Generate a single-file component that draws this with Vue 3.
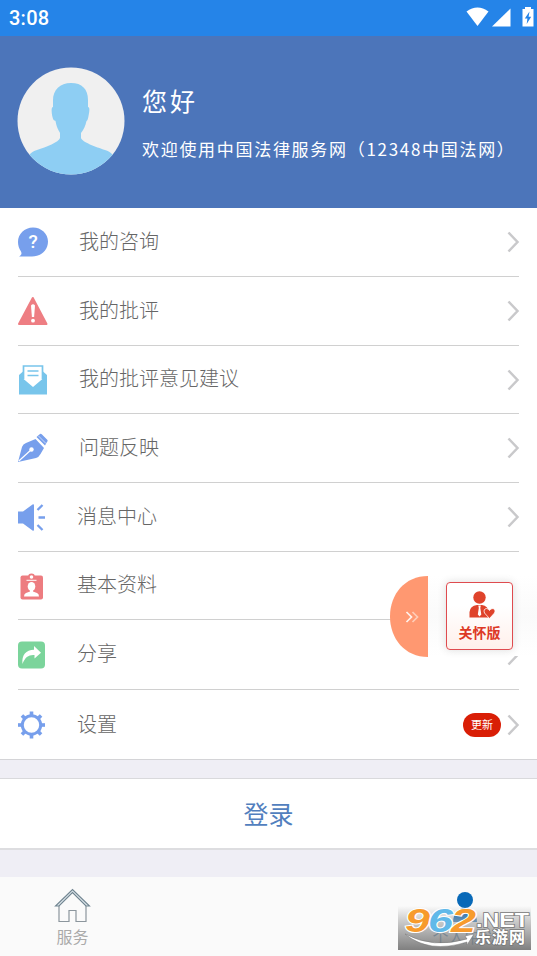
<script setup>
const items = [
  { label: '我的咨询', icon: 'ask', size: 69 },
  { label: '我的批评', icon: 'warn', size: 69 },
  { label: '我的批评意见建议', icon: 'mail', size: 68 },
  { label: '问题反映', icon: 'pen', size: 69 },
  { label: '消息中心', icon: 'sound', size: 69, tight: true },
  { label: '基本资料', icon: 'profile', size: 68, tight: true },
  { label: '分享', icon: 'share', size: 70, tight: true },
  { label: '设置', icon: 'gear', size: 70, tight: true, badge: '更新' },
]
const teeth = [0, 45, 90, 135, 180, 225, 270, 315]
</script>

<template>
  <div class="screen">
    <header class="status">
      <span class="clock">3:08</span>
      <svg class="status-icons" width="70" height="22" viewBox="0 0 70 22">
        <path d="M0.5 4.5Q11.5-3.3 22.5 4.5L11.5 19Z" fill="#fff" />
        <path d="M26 19.5H44.500V1.500Z" fill="#fff" />
        <path d="M59 0h6v2h2.500v17.500h-11V2H59Z" fill="#fff" />
        <path d="M63.500 4.500L58.800 11.500H61.400L60.700 17L65.200 9.700H62.600Z" fill="#2584e8" />
      </svg>
    </header>

    <section class="hero">
      <svg class="avatar" width="108" height="108" viewBox="0 0 108 108">
        <defs><clipPath id="face"><circle cx="54" cy="54" r="53.500" /></clipPath></defs>
        <circle cx="54" cy="54" r="53.500" fill="#f0f0f0" />
        <path clip-path="url(#face)" fill="#8ecef3" d="M54 16C43 16 36 23 36 33V40C34 40 34.500 46 35.500 50C36.300 54 38 53.500 38.500 54C39.500 60 41.500 63 43 66V71C42 75 29 80 20 83C14 85 10 89 8 94V110H100V94C98 89 94 85 88 83C79 80 65 75 64 71V66C66.500 63 68.500 59 69.500 54C70.500 53.500 71 52 71.500 49C72.500 44 73 40 71 40V33C71 22 65 16 54 16Z" />
      </svg>
      <div class="greeting">
        <h1>您好</h1>
        <p>欢迎使用中国法律服务网（12348中国法网）</p>
      </div>
    </section>

    <main class="list">
      <div v-for="item in items" :key="item.icon" class="item" :style="{ height: item.size + 'px' }">
        <svg class="icon" width="32" height="32" viewBox="0 0 32 32">
          <g v-if="item.icon === 'ask'">
            <path d="M15 1.500C23.300 1.500 30 7.800 30 15.500C30 24 23.500 30.500 14 30.500H1C3.500 29 4 27.500 3 25.500C1 22.500 0 19.500 0 16C0 8 6.500 1.500 15 1.500Z" fill="#779fec" />
            <text x="15" y="22" class="question">?</text>
          </g>
          <g v-else-if="item.icon === 'warn'">
            <path d="M14.800 3L28.500 29H1Z" fill="#ee7e83" stroke="#ee7e83" stroke-width="2" stroke-linejoin="round" />
            <path d="M13 10.500Q15 8 17 10.500L16.100 22H13.900Z" fill="#fff" /><circle cx="15" cy="25.700" r="1.900" fill="#fff" />
          </g>
          <g v-else-if="item.icon === 'mail'">
            <path d="M1 11L5 7.500V14.500L15 23L25 14.500V7.500L29 11V30.500H1Z" fill="#78c5eb" />
            <path d="M5.500 15V2H24.500V15M9.500 7H20.500M9.500 11.500H20.500" fill="none" stroke="#78c5eb" stroke-width="1.700" />
          </g>
          <g v-else-if="item.icon === 'pen'">
            <path d="M0 30L4 15Q5 12 8 11L17.500 7L26 16L22.500 22Q21 25 18 26Z" fill="#779fec" />
            <path d="M18.500 5L22 2Q23 1.500 24 2.500L29.500 8Q30 9 29 10L27 13.500Z" fill="#779fec" />
            <path d="M20.500 4L28 11.500" stroke="#fff" stroke-width=".6" />
            <path d="M0.800 29L13.500 17.500" stroke="#fff" stroke-width="1.200" /><circle cx="13.500" cy="17.500" r="2.200" fill="#fff" />
          </g>
          <g v-else-if="item.icon === 'sound'">
            <path d="M0 10.500H5L14.500 3.500Q16 2.500 16 4.500V28.500Q16 30.500 14.500 29.500L5 22.500H0Z" fill="#779fec" />
            <path d="M19.500 9L24.500 4M20.500 16.500H27M19.500 24L24.500 29" stroke="#779fec" stroke-width="2.300" />
          </g>
          <g v-else-if="item.icon === 'profile'">
            <rect x="2.500" y="5.500" width="22.500" height="24" rx="2" fill="#ed7c80" />
            <circle cx="13.500" cy="7" r="2.600" fill="#fff" stroke="#ed7c80" stroke-width="1.600" />
            <path d="M8.500 10.300H18.500" stroke="#fff" />
            <ellipse cx="13.500" cy="16.500" rx="3.800" ry="4.500" fill="#fff" />
            <path d="M12 19H15V21.500L19 23Q21 23.700 21 26.500H6Q6 23.700 8 23L12 21.500Z" fill="#fff" />
          </g>
          <g v-else-if="item.icon === 'share'">
            <rect y="2.500" width="27" height="27" rx="4" fill="#7bd49b" />
            <path d="M4.500 25C3.500 16 8 11 16 10.800V7L23 13.800L16.500 19.500V16C11 15.500 7 18 4.500 25Z" fill="#fff" />
          </g>
          <g v-else>
            <circle cx="13.500" cy="16" r="9.200" fill="none" stroke="#779fec" stroke-width="3" />
            <rect v-for="angle in teeth" :key="angle" x="11.700" y="2.500" width="3.600" height="4.500" fill="#779fec" :transform="`rotate(${angle} 13.500 16)`" />
          </g>
        </svg>
        <span class="label" :class="{ tight: item.tight }">{{ item.label }}</span>
        <span v-if="item.badge" class="badge">{{ item.badge }}</span>
        <svg class="chevron" width="14" height="24" viewBox="0 0 14 24"><path d="M2.500 2.500L11.500 12L2.500 21.500" /></svg>
      </div>
    </main>

    <button class="login">登录</button>

    <nav class="tabs">
      <div class="tab">
        <svg width="38" height="35" viewBox="0 0 38 35" fill="none">
          <path d="M5 17V33.500H15V22.500H22V33.500H32V17" stroke="#8c969d" stroke-width="1.200" />
          <path d="M1.500 18H5L18.500 4.500L32 18H35.500L18.500 1.500Z" fill="#dce5ea" stroke="#718591" stroke-width="1.100" />
        </svg>
        <span>服务</span>
      </div>
      <div class="tab active">
        <svg width="38" height="35" viewBox="0 0 38 35"><circle cx="19" cy="12" r="8" fill="#0869b8" /><path d="M7 34Q8 20 19 20Q30 20 31 34Z" fill="#0869b8" /></svg>
        <span>个人中心</span>
      </div>
    </nav>

    <aside class="care">
      <svg class="handle" width="38" height="81" viewBox="0 0 38 81">
        <path d="M38 0C15 0 0 18 0 40.500C0 63 15 81 38 81Z" fill="#ff9871" />
        <path d="M16.500 36L21.500 41L16.500 46" fill="none" stroke="#fff2ec" stroke-width="1.700" /><path d="M22.500 36L27.500 41L22.500 46" fill="none" stroke="#ffcdb8" stroke-width="1.700" />
      </svg>
      <div class="care-panel">
        <div class="care-card">
          <svg width="28" height="28" viewBox="0 0 28 28">
            <circle cx="11.500" cy="6.500" r="6.200" fill="#df432b" />
            <path d="M1.500 26.500V21Q2 15 9 14H14Q20 15 21 21V26.500Z" fill="#df432b" />
            <path d="M10.300 14.500H12.800L12.300 17L13.300 23.500L11.500 25.500L9.800 23.500L10.800 17Z" fill="#fff" />
            <path d="M21.500 27.500L16.500 22Q15 18 18.500 17.500Q20.500 17.500 21.500 19.500Q22.500 17.500 25 17.500Q28 18.500 26.500 22Z" fill="#df432b" stroke="#fff" stroke-width=".8" />
          </svg>
          <strong>关怀版</strong>
        </div>
      </div>
    </aside>

    <div class="watermark">
      <svg width="133" height="44" viewBox="0 0 133 44">
        <path d="M7 28Q35 43 69 33L67 30L76 28L69 39L69 36Q31 48 7 28Z" fill="#fff" stroke="#777" stroke-width=".5" />
        <g class="digits">
          <text x="7" y="26" textLength="25" lengthAdjust="spacingAndGlyphs" fill="#f79b2d">9</text>
          <text x="30" y="26" textLength="25" lengthAdjust="spacingAndGlyphs" fill="#61b9e9">6</text>
          <text x="53" y="26" textLength="25" lengthAdjust="spacingAndGlyphs" fill="#f79b2d">2</text>
        </g>
        <text x="78" y="21" class="domain" textLength="53" lengthAdjust="spacingAndGlyphs">.NET</text>
        <text x="77" y="37" class="site" textLength="50">乐游网</text>
      </svg>
    </div>
  </div>
</template>

<style>
body { margin: 0; }
</style>
<style scoped>
.screen { position: relative; width: 537px; height: 956px; overflow: hidden; background: #efeef5; font-family: "Noto Sans CJK SC", sans-serif; font-weight: 400; }
.status { height: 36px; box-sizing: border-box; padding: 0 9px; display: flex; align-items: center; justify-content: space-between; background: #2584e8; }
.clock { font: 500 20px/36px Roboto, sans-serif; color: #fff; letter-spacing: .25px; }
.status-icons { margin: 0 -8px 1px 0; }
.hero { height: 172px; display: flex; background: #4c75ba; color: #fff; }
.avatar { margin: 31px 0 0 17px; flex: none; }
.greeting { margin: 44px 0 0 17px; }
h1 { margin: 0; font-size: 25px; line-height: 40px; font-weight: 400; letter-spacing: 3px; }
p { margin: 16px 0 0; font-size: 17px; line-height: 26px; letter-spacing: 1.7px; white-space: nowrap; }
.list { background: #fff; border-bottom: 1px solid #d4d4d7; height: 551px; }
.item { box-sizing: border-box; margin: 0 18px; border-bottom: 1px solid #d0d0d0; display: flex; align-items: center; }
.item:last-child { border-bottom: 0; }
.icon { flex: none; }
.label { margin-left: 29px; font-size: 20px; line-height: 30px; color: #666; font-weight: 300; flex: 1; margin-top: -3px; }
.label.tight { margin-left: 27px; }
.question { font: 500 19px Roboto, sans-serif; fill: #fff; text-anchor: middle; }
.chevron { margin-right: -1px; flex: none; }
.chevron path { fill: none; stroke: #c9c9cb; stroke-width: 2.500; }
.badge { width: 38px; height: 24px; margin-right: 5px; border-radius: 12px; background: #d91e06; color: #fff; font-size: 11px; line-height: 23px; text-align: center; }
.login { display: block; width: 100%; height: 72px; margin: 18px 0 27px; padding: 0 0 1px; border: 0; border-top: 1px solid #d9d9dc; border-bottom: 2px solid #dddde0; background: #fff; color: #527fbe; font: 400 25px/40px "Noto Sans CJK SC", sans-serif; }
.tabs { height: 79px; background: #fafafa; display: flex; justify-content: space-between; }
.tab { width: 145px; box-sizing: border-box; padding-top: 11px; display: flex; flex-direction: column; align-items: center; font-size: 16px; line-height: 24px; color: #aaa; }
.tab span { margin-top: 1px; }
.active { color: #3d79a9; }
.care { position: absolute; left: 390px; top: 576px; width: 147px; height: 81px; display: flex; }
.handle { flex: none; }
.care-panel { flex: 1; height: 80px; background: linear-gradient(#fff, #fafafa 50%, #fff); box-sizing: border-box; padding: 6px 0 0 18px; }
.care-card { box-sizing: border-box; width: 67px; height: 68px; border: 1.500px solid #df4b4f; border-radius: 4px; background: linear-gradient(#fff 35%, #fff0eb); box-shadow: 0 0 8px #ddd; display: flex; flex-direction: column; align-items: center; padding-top: 8px; }
.care-card svg { margin-left: 5px; }
.care-card strong { margin-top: 3px; font-size: 14px; line-height: 20px; font-weight: 700; color: #dd3926; }
.watermark { position: absolute; left: 398px; top: 906px; width: 133px; height: 44px; background: linear-gradient(transparent, #aaa9 35%, #777e); }
.watermark svg { display: block; }
.digits { font: italic 700 33px "Liberation Sans", sans-serif; stroke: #fff; stroke-width: 2px; paint-order: stroke; }
.domain { font: 700 20px "Liberation Sans", sans-serif; fill: #fff; stroke: #777; stroke-width: 1.500px; paint-order: stroke; }
.site { font: 700 16px "Noto Sans CJK SC", sans-serif; fill: #fff; stroke: #777; stroke-width: 1.500px; paint-order: stroke; }
</style>
